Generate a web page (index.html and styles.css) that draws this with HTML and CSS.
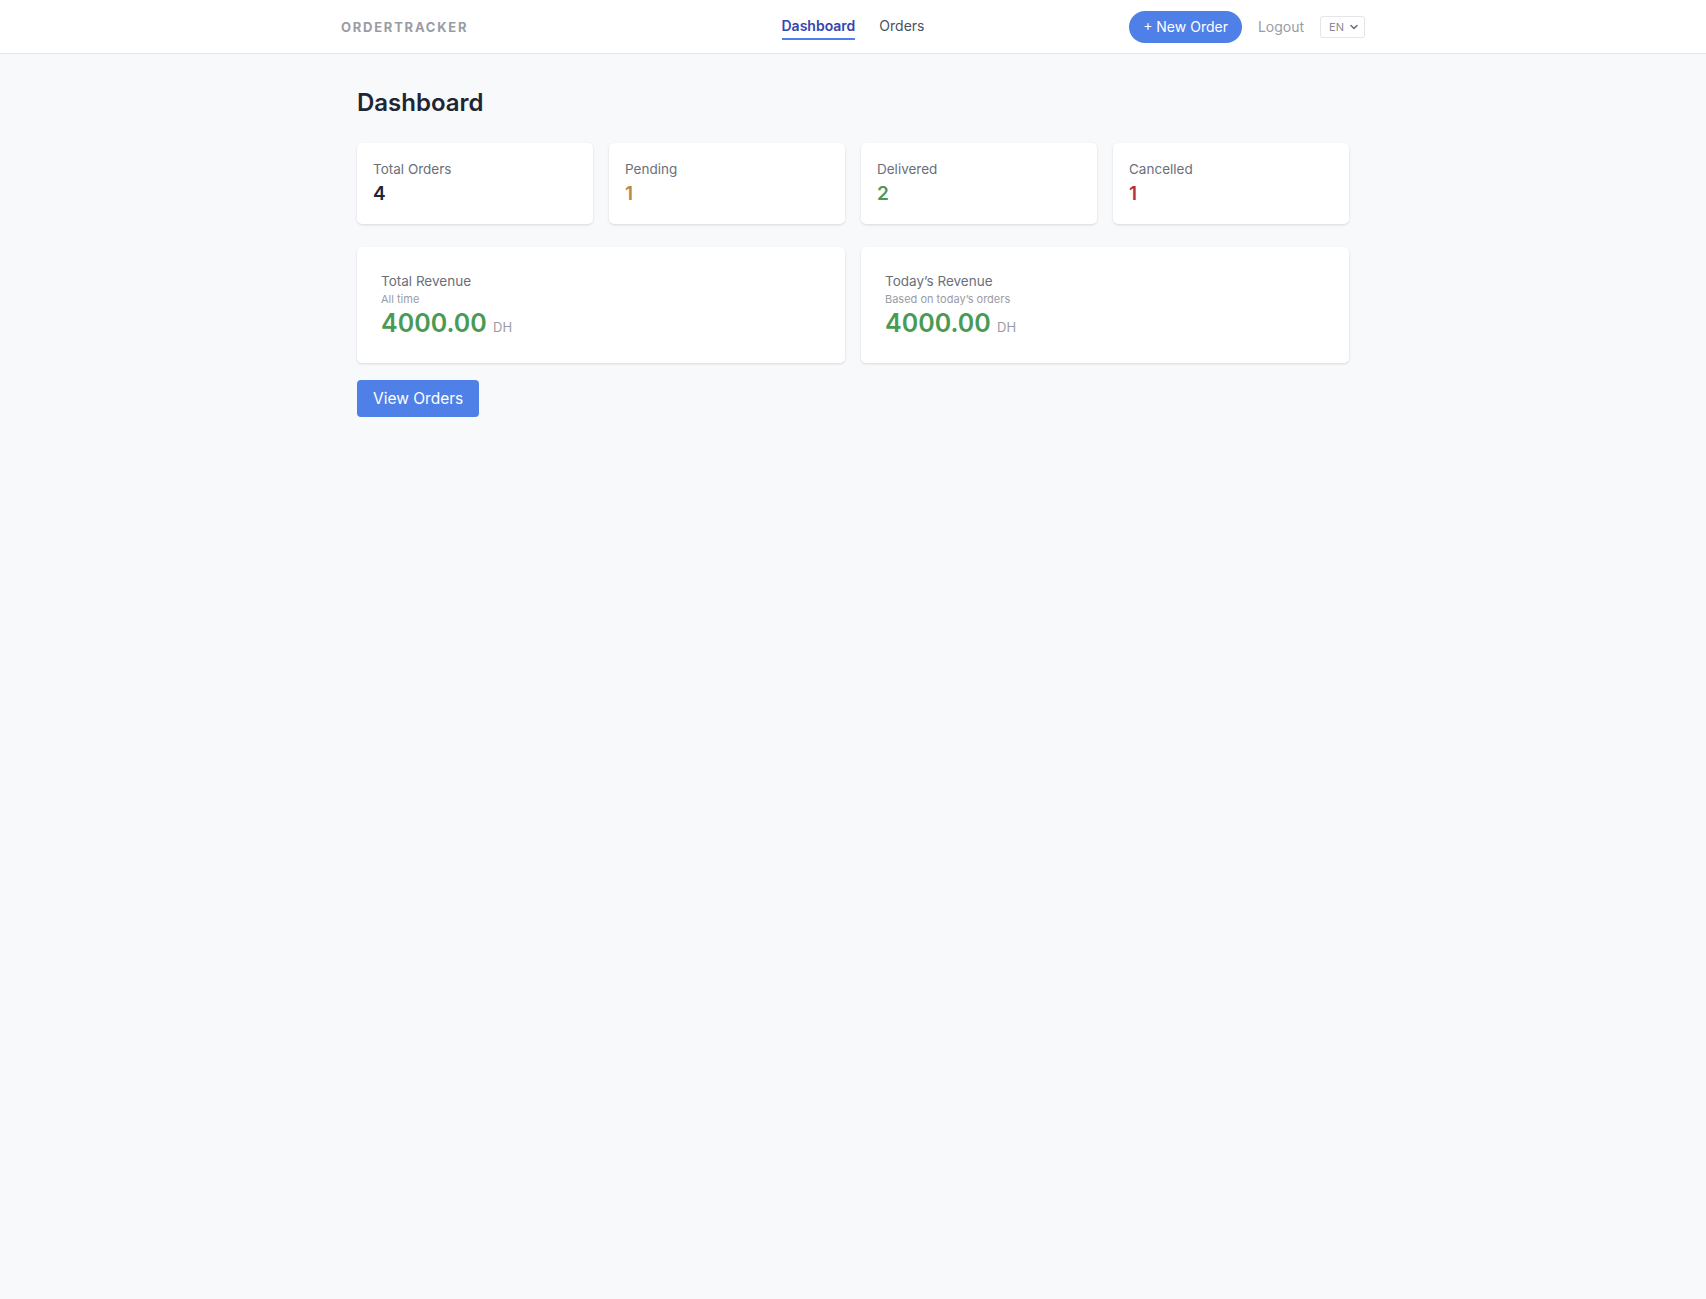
FILE: index.html
```html
<html>

<head>
    <meta charset="utf-8">
    <title>OrderTracker</title>
    <link rel="stylesheet" href="styles.css">
</head>

<body>
    <header class="topbar">
        <div class="topbar-inner">
            <a href="#" class="brand">OrderTracker</a>
            <nav class="nav">
                <a href="#" class="nav-link active">Dashboard</a>
                <a href="#" class="nav-link">Orders</a>
            </nav>
            <div class="actions">
                <a href="#" class="btn-pill">+ New Order</a>
                <a href="#" class="logout">Logout</a>
                <div class="lang">
                    <span>EN</span>
                    <svg width="10" height="10" viewBox="0 0 10 10"><path d="M2 3.5 L5 6.5 L8 3.5" fill="none" stroke="#6b7280" stroke-width="1.6" stroke-linecap="round" stroke-linejoin="round"/></svg>
                </div>
            </div>
        </div>
    </header>

    <main class="page">
        <h1>Dashboard</h1>

        <section class="stats">
            <div class="card stat">
                <div class="stat-label">Total Orders</div>
                <div class="stat-value">4</div>
            </div>
            <div class="card stat">
                <div class="stat-label">Pending</div>
                <div class="stat-value pending">1</div>
            </div>
            <div class="card stat">
                <div class="stat-label">Delivered</div>
                <div class="stat-value delivered">2</div>
            </div>
            <div class="card stat">
                <div class="stat-label">Cancelled</div>
                <div class="stat-value cancelled">1</div>
            </div>
        </section>

        <section class="revenue">
            <div class="card rev">
                <div class="rev-label">Total Revenue</div>
                <div class="rev-sub">All time</div>
                <div class="rev-amount">4000.00 <span class="currency">DH</span></div>
            </div>
            <div class="card rev">
                <div class="rev-label">Today’s Revenue</div>
                <div class="rev-sub">Based on today’s orders</div>
                <div class="rev-amount">4000.00 <span class="currency">DH</span></div>
            </div>
        </section>

        <a href="#" class="btn">View Orders</a>
    </main>
</body>

</html>
```

FILE: styles.css
```css
* {
    box-sizing: border-box;
}

body {
    margin: 0;
    background-color: #f8f9fb;
    font-family: "Inter", "Roboto", "Liberation Sans", sans-serif;
    color: #1f2633;
}

a {
    text-decoration: none;
}

.topbar {
    background-color: #fff;
    border-bottom: 1px solid #e5e7eb;
}

.topbar-inner {
    max-width: 1024px;
    height: 53px;
    margin: 0 auto;
    display: grid;
    grid-template-columns: 1fr auto 1fr;
    align-items: center;
}

.brand {
    font-size: 13px;
    font-weight: 700;
    letter-spacing: 0.135em;
    text-transform: uppercase;
    color: #9a9ca5;
}

.nav {
    display: flex;
    gap: 24px;
}

.nav-link {
    font-size: 14px;
    line-height: 20px;
    color: #4b5060;
    padding: 3px 0 2px;
    border-bottom: 2px solid transparent;
}

.nav-link.active {
    color: #3545b0;
    font-weight: 600;
    border-bottom-color: #4f80e8;
}

.actions {
    display: flex;
    align-items: center;
    justify-content: flex-end;
    gap: 16px;
}

.btn-pill {
    background-color: #4f80e8;
    color: #fff;
    font-size: 14px;
    line-height: 20px;
    padding: 6px 14px;
    border-radius: 999px;
}

.logout {
    font-size: 14px;
    color: #9a9ca5;
}

.lang {
    display: flex;
    align-items: center;
    gap: 5px;
    height: 22px;
    padding: 0 5px 0 8px;
    border: 1px solid #e3e5e9;
    border-radius: 3px;
    font-size: 11px;
    color: #8a8d96;
}

.page {
    max-width: 1024px;
    margin: 0 auto;
    padding: 33px 16px;
}

h1 {
    font-size: 24px;
    line-height: 32px;
    font-weight: 600;
    margin: 0 0 24px;
    color: #1f2633;
}

.card {
    background-color: #fff;
    border-radius: 5px;
    box-shadow: 0 1px 3px rgba(16, 24, 40, 0.1), 0 1px 2px rgba(16, 24, 40, 0.04);
}

.stats {
    display: grid;
    grid-template-columns: repeat(4, 1fr);
    gap: 16px;
    margin-bottom: 23px;
}

.stat {
    padding: 16px;
}

.stat-label {
    font-size: 13.5px;
    line-height: 20px;
    color: #6b6f7a;
}

.stat-value {
    font-size: 19px;
    line-height: 28px;
    font-weight: 600;
    color: #1f2633;
    margin-top: 1px;
}

.stat-value.pending {
    color: #b8893e;
}

.stat-value.delivered {
    color: #4a9a55;
}

.stat-value.cancelled {
    color: #b4333e;
}

.revenue {
    display: grid;
    grid-template-columns: 1fr 1fr;
    gap: 16px;
    margin-bottom: 17px;
}

.rev {
    padding: 24px 24px 21px;
}

.rev-label {
    font-size: 13.5px;
    line-height: 20px;
    color: #6b6f7a;
}

.rev-sub {
    font-size: 11px;
    line-height: 16px;
    color: #9a9ca5;
}

.rev-amount {
    font-size: 25px;
    line-height: 29px;
    font-weight: 600;
    color: #4a9a55;
    margin-top: 2px;
}

.currency {
    font-size: 13px;
    font-weight: 400;
    color: #9a9ca5;
}

.btn {
    display: inline-block;
    background-color: #4f80e8;
    color: #fff;
    font-size: 15.5px;
    line-height: 21px;
    padding: 8px 16px;
    border-radius: 4px;
}
```
